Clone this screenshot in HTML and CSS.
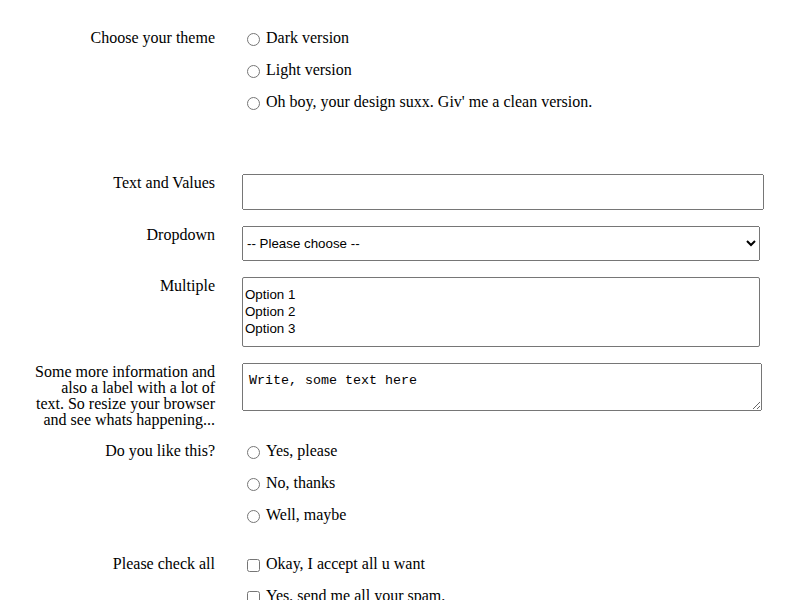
FILE: index.html
```html
<!DOCTYPE html>
<html lang="en">
<head>
<meta charset="utf-8">
<title>Form</title>
<link rel="stylesheet" href="styles.css">
</head>
<body>
<form class="form">
  <div class="row group first">
    <div class="label">Choose your theme</div>
    <div class="options">
      <label class="opt"><input type="radio" name="theme"><span>Dark version</span></label>
      <label class="opt"><input type="radio" name="theme"><span>Light version</span></label>
      <label class="opt"><input type="radio" name="theme"><span>Oh boy, your design suxx. Giv' me a clean version.</span></label>
    </div>
  </div>

  <div class="row">
    <label class="label" for="t1">Text and Values</label>
    <input class="ctl text" id="t1" type="text">
  </div>

  <div class="row">
    <label class="label" for="s1">Dropdown</label>
    <select class="ctl drop" id="s1">
      <option>-- Please choose --</option>
      <option>Option 1</option>
      <option>Option 2</option>
    </select>
  </div>

  <div class="row">
    <label class="label" for="m1">Multiple</label>
    <select class="ctl multi" id="m1" multiple>
      <option>Option 1</option>
      <option>Option 2</option>
      <option>Option 3</option>
    </select>
  </div>

  <div class="row">
    <label class="label" for="a1">Some more information and also a label with a lot of text. So resize your browser and see whats happening...</label>
    <textarea class="ctl area" id="a1">Write, some text here</textarea>
  </div>

  <div class="row group">
    <div class="label">Do you like this?</div>
    <div class="options">
      <label class="opt"><input type="radio" name="like"><span>Yes, please</span></label>
      <label class="opt"><input type="radio" name="like"><span>No, thanks</span></label>
      <label class="opt"><input type="radio" name="like"><span>Well, maybe</span></label>
    </div>
  </div>

  <div class="row group checks">
    <div class="label">Please check all</div>
    <div class="options">
      <label class="opt"><input type="checkbox"><span>Okay, I accept all u want</span></label>
      <label class="opt"><input type="checkbox"><span>Yes, send me all your spam.</span></label>
    </div>
  </div>
</form>
</body>
</html>
```

FILE: styles.css
```css
html, body {
  background: #fff;
}

body {
  margin: 8px;
  font-family: "Liberation Serif", "Times New Roman", serif;
  font-size: 16px;
  color: #000;
}

.form {
  display: flex;
  flex-direction: column;
  gap: 12px;
  padding-top: 16px;
}

.row {
  display: grid;
  grid-template-columns: 184px 1fr;
  column-gap: 27px;
  padding-left: 23px;
  align-items: start;
}

.label {
  text-align: right;
  line-height: 16px;
  padding-top: 3px;
}

.group {
  padding-top: 3px;
  padding-bottom: 16px;
}

.group .label {
  padding-top: 0;
}

.group.first {
  padding-top: 6px;
  margin-bottom: 34px;
}

.group.checks {
  padding-top: 5px;
}

.options {
  display: flex;
  flex-direction: column;
  gap: 16px;
}

.opt {
  display: flex;
  align-items: center;
  line-height: 16px;
}

.opt input {
  margin: 3px 3px 0 5px;
  width: 13px;
  height: 13px;
}

.opt span {
  margin-left: 3px;
}

.ctl {
  box-sizing: border-box;
  margin: 2px 0;
  font-family: "Liberation Sans", Arial, sans-serif;
  font-size: 13.33px;
}

.text {
  width: 522px;
  height: 36px;
}

.drop {
  width: 518px;
  height: 35px;
}

.multi {
  width: 518px;
  height: 70px;
  padding: 9px 0 0;
  overflow: hidden;
}

.area {
  width: 520px;
  height: 48px;
  padding: 9px 6px 6px;
  font-family: "Liberation Mono", "Courier New", monospace;
  font-size: 13.33px;
  color: #000;
}
```
